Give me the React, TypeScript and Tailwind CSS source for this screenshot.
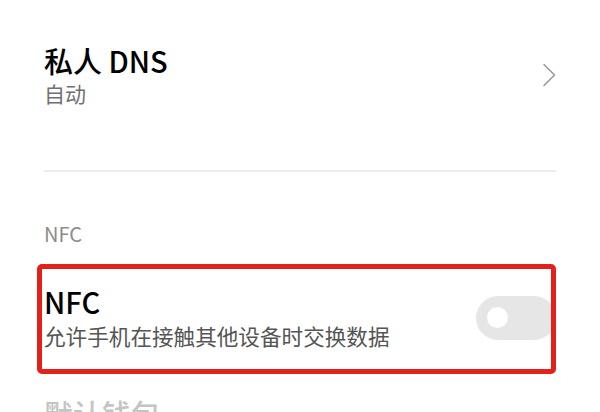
import React from "react";

function Chevron() {
  return (
    <svg width="14" height="24" viewBox="0 0 14 24" fill="none" className="shrink-0">
      <path d="M2 1.5 L12.5 12 L2 22.5" stroke="#9b9b9b" strokeWidth="1.6" strokeLinecap="round" strokeLinejoin="round" />
    </svg>
  );
}

function Toggle() {
  return (
    <div className="w-[80px] h-[44px] rounded-full bg-[#e6e6e6] flex items-center pl-[11px] shrink-0 mr-[-8px]">
      <div className="w-[21px] h-[21px] rounded-full bg-white" />
    </div>
  );
}

export default function App() {
  return (
    <div className="relative w-[600px] h-[412px] overflow-hidden bg-white font-['Noto_Sans_CJK_SC','Noto_Sans',sans-serif]">
      <div className="px-[44px] pt-[43px] flex items-center justify-between">
        <div className="flex flex-col">
          <span className="text-[29px] leading-[34px] font-medium text-black">私人 DNS</span>
          <span className="text-[21px] leading-[28px] text-[#707070] mt-[2px]">自动</span>
        </div>
        <Chevron />
      </div>

      <div className="mx-[44px] mt-[63px] h-[2px] bg-[#ececec]" />

      <div className="px-[44px] pt-[49px] text-[20px] leading-[26px] text-[#8c8c8c]">NFC</div>

      <div className="relative mt-[22px] mx-[40px]">
        <div className="pl-[4px] pr-[12px] pt-[15px] pb-[14px] flex items-center justify-between">
          <div className="flex flex-col">
            <span className="text-[29px] leading-[34px] font-medium text-black">NFC</span>
            <span className="text-[21.6px] leading-[30px] text-[#555555] mt-[3px]">允许手机在接触其他设备时交换数据</span>
          </div>
          <Toggle />
        </div>
        {/* red annotation box */}
        <div className="absolute left-[-3px] top-[-5px] w-[519px] h-[110px] border-[5px] border-[#e4201b] rounded-[5px] pointer-events-none" />
      </div>

      <div className="px-[44px] mt-[30px] text-[29px] leading-[36px] font-medium text-[#c4c4c4]">默认钱包</div>
    </div>
  );
}
